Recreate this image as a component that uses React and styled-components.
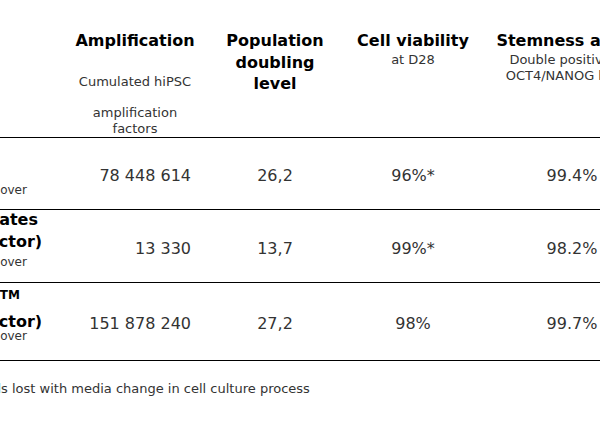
import React from 'react';
import styled, { createGlobalStyle } from 'styled-components';

const GlobalStyle = createGlobalStyle`
  html, body {
    margin: 0;
    padding: 0;
    background: #ffffff;
    overflow: hidden;
  }
  body {
    font-family: "DejaVu Sans", Verdana, sans-serif;
    color: #333333;
  }
`;

const COLS = '298px 140px 140px 136px 158px';

const Viewport = styled.div`
  width: 600px;
  height: 427px;
  overflow: hidden;
`;

const Sheet = styled.div`
  margin-left: -233px;
  width: 872px;
`;

const HeaderRow = styled.div`
  display: grid;
  grid-template-columns: ${COLS};
  align-items: start;
  border-bottom: 1px solid #000;
`;

const HeaderCell = styled.div`
  padding: 30px 10px 0;
  text-align: center;
`;

const Title = styled.div`
  font-size: 16px;
  font-weight: 700;
  line-height: 21.5px;
  color: #000;
`;

const Sub = styled.p`
  margin: ${(p) => p.$gap || 0}px 0 0;
  font-size: 13px;
  line-height: 16px;
  color: #333;
`;

const BodyRow = styled.div`
  display: grid;
  grid-template-columns: ${COLS};
  height: ${(p) => p.$h}px;
  border-bottom: 1px solid #000;
`;

const LabelCell = styled.div`
  display: flex;
  flex-direction: column;
  padding: ${(p) => p.$top || 0}px 10px 0;
  white-space: nowrap;
  overflow: hidden;
`;

const LabelTitle = styled.div`
  font-size: 16px;
  font-weight: 700;
  line-height: ${(p) => p.$lh}px;
  color: #000;
`;

const LabelNote = styled.div`
  font-size: 12px;
  line-height: ${(p) => p.$lh}px;
  color: #333;
`;

const Trademark = styled.span`
  font-size: 12px;
  font-weight: 700;
  line-height: 1;
  vertical-align: 4px;
`;

const ValueCell = styled.div`
  display: flex;
  align-items: center;
  justify-content: ${(p) => (p.$align === 'right' ? 'flex-end' : 'center')};
  padding: 4px ${(p) => p.$pr ?? 10}px 0 ${(p) => p.$pl ?? 10}px;
  font-size: 16px;
  color: #333;
  white-space: nowrap;
`;

const Footnote = styled.p`
  margin: 19.5px 0 0;
  padding-left: 10px;
  font-size: 13px;
  line-height: 16px;
  color: #333;
  white-space: nowrap;
`;

const NOTE = '28 days of culture, with medium turnover';
const REACTOR = '(10 L stirred-tank bioreactor)';

function Values({ amp, pdl, via, stem }) {
  return (
    <>
      <ValueCell $align="right" $pr={14}>{amp}</ValueCell>
      <ValueCell>{pdl}</ValueCell>
      <ValueCell>{via}</ValueCell>
      <ValueCell $pl={34}>{stem}</ValueCell>
    </>
  );
}

export default function App() {
  return (
    <>
      <GlobalStyle />
      <Viewport>
        <Sheet>
          <HeaderRow>
            <HeaderCell />
            <HeaderCell>
              <Title>Amplification</Title>
              <Sub $gap={22.5}>Cumulated hiPSC</Sub>
              <Sub $gap={15}>amplification factors</Sub>
            </HeaderCell>
            <HeaderCell>
              <Title>Population doubling level</Title>
            </HeaderCell>
            <HeaderCell>
              <Title>Cell viability</Title>
              <Sub>at D28</Sub>
            </HeaderCell>
            <HeaderCell>
              <Title>Stemness and</Title>
              <Sub>Double positive OCT4/NANOG by</Sub>
            </HeaderCell>
          </HeaderRow>

          <BodyRow $h={71}>
            <LabelCell $top={22}>
              <LabelTitle $lh={22}>Standard 2D culture</LabelTitle>
              <LabelNote $lh={16}>{NOTE}</LabelNote>
            </LabelCell>
            <Values amp="78 448 614" pdl="26,2" via="96%*" stem="99.4%" />
          </BodyRow>

          <BodyRow $h={72}>
            <LabelCell>
              <LabelTitle $lh={20}>Competitor's cell aggregates</LabelTitle>
              <LabelTitle $lh={24}>{REACTOR}</LabelTitle>
              <LabelNote $lh={16}>{NOTE}</LabelNote>
            </LabelCell>
            <Values amp="13 330" pdl="13,7" via="99%*" stem="98.2%" />
          </BodyRow>

          <BodyRow $h={77}>
            <LabelCell>
              <LabelTitle $lh={29}>
                Our process with CellPro<Trademark>TM</Trademark>
              </LabelTitle>
              <LabelTitle $lh={20}>{REACTOR}</LabelTitle>
              <LabelNote $lh={8}>{NOTE}</LabelNote>
            </LabelCell>
            <Values amp="151 878 240" pdl="27,2" via="98%" stem="99.7%" />
          </BodyRow>

          <Footnote>
            * Under-estimated viability, as cells lost with media change in cell culture process
          </Footnote>
        </Sheet>
      </Viewport>
    </>
  );
}
